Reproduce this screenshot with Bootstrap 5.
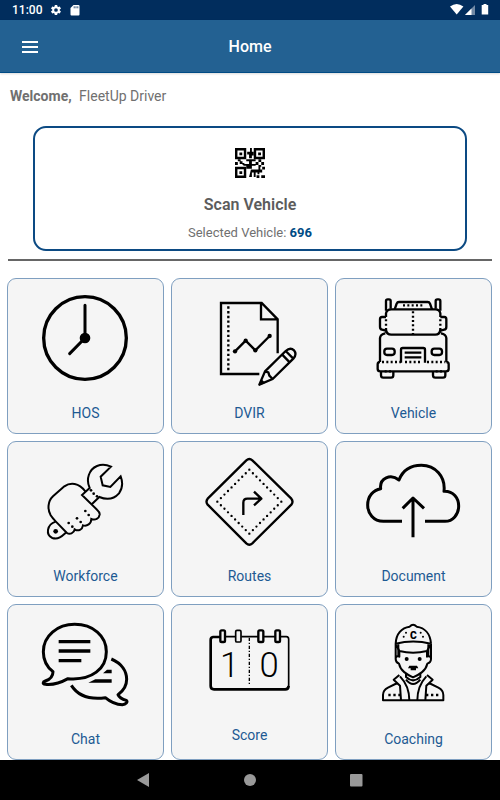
<!DOCTYPE html>
<html lang="en">
<head>
<meta charset="utf-8">
<meta name="viewport" content="width=device-width, initial-scale=1">
<title>Home</title>
<link rel="stylesheet" href="https://cdn.jsdelivr.net/npm/bootstrap@5.3.0/dist/css/bootstrap.min.css">
<style>
  body { font-family: Roboto, "Liberation Sans", sans-serif; font-size: 14px; line-height: 20px; color: #707070; background: #fff; }
  .status-bar { height: 20px; padding: 0 11px 0 12px; background: #012d5d; color: #fff; font-size: 12px; font-weight: 500; }
  .app-bar { height: 53px; padding-top: 2px; background: #236192; border-bottom: 1px solid #004b85; box-shadow: 0 1px 2px rgba(0,0,0,.15); display: grid; grid-template-columns: 60px 1fr 60px; }
  .app-title { font-size: 16px; line-height: 20px; font-weight: 500; color: #fff; }
  .plain-btn { background: none; border: 0; padding: 0; line-height: 0; }
  .welcome { padding: 13px 10px 0; }
  .welcome strong { font-weight: 700; margin-right: 4px; }
  .scan-card { margin: 20px 33px 0; padding: 20px 0 6px; border: 2px solid #0c4a83; border-radius: 13px; color: #707070; }
  .scan-title { font-size: 16px; line-height: 20px; font-weight: 600; color: #5c5c5c; margin-top: 17px; }
  .scan-note { font-size: 13px; line-height: 20px; margin-top: 8px; }
  .scan-note b { color: #004b85; font-weight: 700; }
  .divider { margin: 8px 8px 0; border: 0; border-top: 2px solid #666; opacity: 1; }
  .tiles { display: grid; grid-template-columns: repeat(3, 1fr); gap: 7px; padding: 17px 8px 0 7px; }
  .tile { display: block; padding-bottom: 10px; background: #f5f5f5; border: 1px solid #7f9fc0; border-radius: 9px; color: #1d5a93; font-size: 14px; line-height: 20px; text-align: center; text-decoration: none; }
  .tile svg { display: block; width: 100%; height: auto; margin-bottom: 11px; fill: none; stroke: #000; stroke-width: 7; stroke-linejoin: round; }
  .tile svg .solid { fill: #000; stroke: none; }
  .tile svg text { fill: #000; stroke: none; font-family: Roboto, sans-serif; }
  .system-nav { height: 40px; background: #000; }
  .system-nav .plain-btn { width: 106px; height: 40px; }
</style>
<script src="https://cdn.jsdelivr.net/npm/bootstrap@5.3.0/dist/js/bootstrap.bundle.min.js"></script>
</head>
<body class="d-flex flex-column min-vh-100">

<div class="status-bar d-flex align-items-center">
  <span>11:00</span>
  <svg class="ms-2" width="12" height="12" viewBox="0 0 24 24" fill="#fff" aria-hidden="true"><path fill-rule="evenodd" d="M19.4 13l2.1 1.600q.3.3.1.7l-2 3.400q-.2.400-.6.200l-2.500-1-1.700 1-.4 2.600q-.1.500-.5.500h-4q-.4 0-.5-.5l-.4-2.600-1.700-1-2.500 1q-.4.200-.6-.2l-2-3.400q-.2-.4.1-.7L4.600 13v-2L2.400 9.400q-.3-.3-.1-.7l2-3.400q.2-.4.6-.2l2.500 1 1.700-1 .4-2.600q.1-.5.5-.5h4q.4 0 .5.500l.4 2.600 1.700 1 2.500-1q.4-.2.600.2l2 3.400q.2.400-.1.700L19.400 11zM12 8.300a3.700 3.700 0 1 0 0 7.400 3.700 3.700 0 0 0 0-7.400z"/></svg>
  <svg class="ms-2" width="10" height="12" viewBox="0 0 10 12" aria-hidden="true"><path fill="#fff" d="M3.500 1H8.500Q9.500 1 9.500 2V10.500Q9.500 11.500 8.500 11.500H1.500Q.5 11.500.5 10.500V4z"/><path stroke="#012d5d" stroke-width=".8" d="M4.200 2.300V4.300M6 2.300V4.300M7.800 2.300V4.300"/></svg>
  <svg class="ms-auto" width="40" height="12" viewBox="0 0 40 12" fill="#fff" aria-hidden="true"><path d="M1 2.500Q7.700-2.500 14.400 2.500L7.700 10.500z"/><path d="M16 11L26 1V11z" fill="#7189a5"/><path d="M16 11L22.500 4.500V11z"/><path d="M34.500 1V0H37.500V1H39.200V10.500H32.700V1z"/></svg>
</div>

<header class="app-bar align-items-center">
  <button class="plain-btn" type="button" aria-label="Open menu">
    <svg width="16" height="12" viewBox="0 0 16 12" fill="none" stroke="#fff" stroke-width="2" aria-hidden="true"><path d="M0 1H16M0 6H16M0 11H16"/></svg>
  </button>
  <h1 class="app-title text-center m-0">Home</h1>
</header>

<main>
  <p class="welcome m-0"><strong>Welcome,</strong> FleetUp Driver</p>

  <section class="scan-card text-center">
    <svg class="d-block mx-auto" width="30" height="30" viewBox="0 0 32 32" aria-hidden="true">
      <path fill="none" stroke="#000" stroke-width="2.600" d="M1.300 1.300H10.700V10.700H1.300zM21.300 1.300H30.700V10.700H21.300zM1.300 21.300H10.700V30.700H1.300z"/>
      <path d="M4.700 4.700h3v3h-3zM24.700 4.700h3v3h-3zM4.700 24.700h3v3h-3zM16 0h2v4h2v4h-2v3h-3V7h-2V4h3zM3 12h3v2H3zM0 15h3v3H0zM5 14h3v3H5zM8 16h2v2H8zM12 12h10v2h-4v3h4v2h-4v3h-6v-3H9v-2h6v-3h-3zM25 12h3v3h-3zM22 15h3v3h-3zM28 15h3v3h-3zM25 18h3v2h-3zM29 20h3v3h-3zM17 23h8v-3h2v3h2v3h-3v2h-2v-2h-2v5h-2v-5h-2v5h-3zM23 29h3v3h-3zM28 29h4v3h-4z"/>
    </svg>
    <h2 class="scan-title mb-0">Scan Vehicle</h2>
    <p class="scan-note mb-0">Selected Vehicle: <b>696</b></p>
  </section>

  <hr class="divider">

  <nav class="tiles" aria-label="Sections">
    <a class="tile" href="#hos">
      <svg viewBox="25 27 465 339" aria-hidden="true"><circle cx="256" cy="204" r="124" stroke-width="10"/><path stroke-width="9" stroke-linecap="round" d="M256 106V204L210 251"/><circle class="solid" cx="256" cy="204" r="16"/></svg>
      HOS</a>

    <a class="tile" href="#dvir">
      <svg viewBox="21 27 465 339" aria-hidden="true"><path d="M283 312H168V99H290L338 148V250M288 99V148H338" stroke-linejoin="miter"/><path stroke-dasharray="7 7.200" d="M190 109V304"/><path d="M210 244L242 212L271 241L314 198"/><g class="solid"><circle cx="210" cy="244" r="6.500"/><circle cx="242" cy="212" r="6.500"/><circle cx="271" cy="241" r="6.500"/><circle cx="314" cy="198" r="6.500"/><path d="M283 346L289 327L301 339z"/></g><path d="M283 344L300 304L362 243Q376 230 387 241Q397 253 385 266L323 327zM300 304L310 307L313 317L323 327M351 253L374 277M362 243L385 266"/></svg>
      DVIR</a>

    <a class="tile" href="#vehicle">
      <svg viewBox="18 27 465 339" aria-hidden="true">
        <path d="M168 122V93Q168 88 173 88H177Q182 88 182 93V116M317 116V93Q317 88 322 88H326Q331 88 331 93V122M194 118L200 101Q202 96 207 96H293Q298 96 300 101L306 118"/>
        <path d="M168 141V130Q170 118 184 118H316Q329 118 331 130V141M168 180Q170 194 184 194H316Q329 194 331 180M168 141H156Q150 141 150 148V170Q150 178 156 179L168 182V188M331 141H343Q349 141 349 148V170Q349 178 343 179L331 182V188"/>
        <path stroke-dasharray="6 7" d="M168 148V180M331 148V180M249 124V192M219 106H284M156 276H213M225 276H276M291 276H346M164 304H183M317 304H338"/>
        <path d="M150 276V204Q151 193 166 190M349 276V204Q348 193 333 190M213 278V239Q213 234 218 234H280Q285 234 285 239V278M224 248H274M224 262H274M150 276Q143 276 143 283V297Q143 304 151 304H348Q356 304 356 297V283Q356 276 349 276M153 304V316Q153 323 160 323H183Q190 323 190 316V304M309 304V316Q309 323 316 323H339Q346 323 346 316V304"/>
        <rect x="163" y="236" width="31" height="19" rx="8"/><rect x="305" y="236" width="31" height="19" rx="8"/>
      </svg>
      Vehicle</a>

    <a class="tile" href="#workforce">
      <svg viewBox="25 18 465 339" aria-hidden="true">
        <path stroke-width="6" d="M256 165C238 140 212 138 194 151L160 181C144 196 143 220 153 238Q158 246 168 256L201 290C210 297 223 292 225 280C236 287 248 281 250 268C262 272 275 263 275 249C287 254 298 248 300 236Q301 229 292 221L247 177L270 156C258 130 268 100 292 90Q312 82 334 92L303 122L309 148L332 153L363 121Q374 150 358 172Q335 198 299 183L277 204" stroke-linejoin="miter"/>
        <path stroke-width="6" d="M168 257C140 266 138 298 158 306C176 312 188 300 200 289"/>
        <g class="solid"><circle cx="168" cy="286" r="7"/><circle cx="207" cy="261" r="4"/><circle cx="218" cy="272" r="4"/><circle cx="232" cy="247" r="4"/><circle cx="243" cy="258" r="4"/><circle cx="257" cy="225" r="4"/><circle cx="267" cy="237" r="4"/><circle cx="274" cy="163" r="4"/><circle cx="282" cy="173" r="4"/><circle cx="292" cy="181" r="4"/></g>
      </svg>
      Workforce</a>

    <a class="tile" href="#routes">
      <svg viewBox="21 18 465 339" aria-hidden="true"><path d="M244 73Q253 65 262 73L379 188Q386 197 379 206L262 322Q253 330 244 322L128 206Q121 197 128 188z"/><path stroke-width="7" stroke-linecap="round" stroke-dasharray="0 15.085" d="M253 101L349 197L253 293L157 197z"/><path d="M235 237V200Q235 188 247 188H288M267 167L289 188L267 208"/></svg>
      Routes</a>

    <a class="tile" href="#document">
      <svg viewBox="18 18 465 339" stroke-linejoin="miter" aria-hidden="true"><path stroke-width="9" d="M216 256H160C130 256 113 232 113 207C113 180 130 162 152 158C148 126 182 112 207 132C219 102 245 88 274 88C316 88 347 122 342 166C370 165 386 186 386 210C386 236 368 256 345 256H285M249 304V186M218 217L249 186L282 217"/></svg>
      Document</a>

    <a class="tile" href="#chat">
      <svg viewBox="25 12 465 339" aria-hidden="true"><path stroke-width="9" d="M160 212C141 197 131 178 131 152C131 105 173 70 225 70C280 70 320 105 320 152C320 202 278 239 205 233C180 247 155 252 137 250C128 249 129 243 137 240C151 235 160 225 160 212zM335 174C368 188 381 213 381 235C381 256 371 270 355 281C359 291 368 295 380 298C385 303 379 310 368 311C350 311 331 302 317 290C270 296 235 285 215 253"/><path stroke-width="10" d="M177 122H272M177 150H272M177 179H245"/><path class="solid" d="M310 217L322 206H336V217zM266 245L287 235H336V245z"/></svg>
      Chat</a>

    <a class="tile" href="#score">
      <svg viewBox="21 12 465 327" aria-hidden="true">
        <path stroke-width="5" d="M180 107H211M229 107H279M297 107H330M346 107H364Q371 107 371 115V258"/><path stroke-width="8" d="M165 108H144Q137 109 137 117V255Q137 265 147 265H361Q370 265 371 255"/>
        <rect x="166" y="88" width="14" height="35" rx="4" stroke-width="7"/><rect x="212" y="88" width="16" height="35" rx="4" stroke-width="5"/><rect x="280" y="88" width="15" height="35" rx="4" stroke-width="7"/><rect x="331" y="88" width="14" height="35" rx="4"/>
        <path stroke-width="4" stroke-dasharray="10 5 4 5" d="M253 110V250"/>
        <text x="194" y="228" font-size="104" font-weight="300" text-anchor="middle">1</text><text x="312" y="228" font-size="104" font-weight="300" text-anchor="middle">0</text>
      </svg>
      Score</a>

    <a class="tile" href="#coaching">
      <svg viewBox="18 12 465 339" aria-hidden="true">
        <path stroke-width="6" d="M197 128C198 98 215 80 239 77Q249 66 260 77C284 80 301 98 303 128M197 128Q249 115 303 128L291 150Q249 160 208 150zM197 128V174M303 128V174M208 149V167Q197 163 197 174Q197 184 207 188C212 210 230 220 249 229C269 220 287 210 292 188Q303 184 303 174Q303 163 291 167V149"/>
        <path stroke-width="6" d="M228 216V228Q249 248 271 228V216M228 236Q249 262 271 236M208 222L191 236L210 254L213 298M210 226Q238 255 238 298M291 222L308 236L289 254L286 298M289 226Q262 255 262 298M202 246L174 260Q159 268 159 282V298H340V282Q340 268 325 260L297 246"/>
        <path stroke-dasharray="7 8" d="M175 282H213M288 282H326"/>
        <g class="solid"><circle cx="230" cy="174" r="6"/><circle cx="269" cy="174" r="6"/><path d="M234 202L238 194H261L265 202H258V208H242V202zM202 130H208V165H202zM292 130H298V165H292z"/><circle cx="228" cy="95" r="3"/><circle cx="221" cy="107" r="3"/><circle cx="272" cy="95" r="3"/><circle cx="279" cy="107" r="3"/></g>
        <text x="250" y="114" font-size="31" font-weight="900" text-anchor="middle">C</text>
      </svg>
      Coaching</a>
  </nav>
</main>

<footer class="system-nav mt-auto d-flex justify-content-center">
  <button class="plain-btn" type="button" aria-label="Back"><svg width="14" height="14" viewBox="0 0 14 14" fill="#999"><path d="M0 7L12 0V14z"/></svg></button>
  <button class="plain-btn" type="button" aria-label="Home"><svg width="14" height="14" viewBox="0 0 14 14" fill="#999"><circle cx="7" cy="7" r="6"/></svg></button>
  <button class="plain-btn" type="button" aria-label="Recent apps"><svg width="14" height="14" viewBox="0 0 14 14" fill="#999"><rect x="1" y="1" width="12.500" height="12.500" rx="1"/></svg></button>
</footer>
</body>
</html>
